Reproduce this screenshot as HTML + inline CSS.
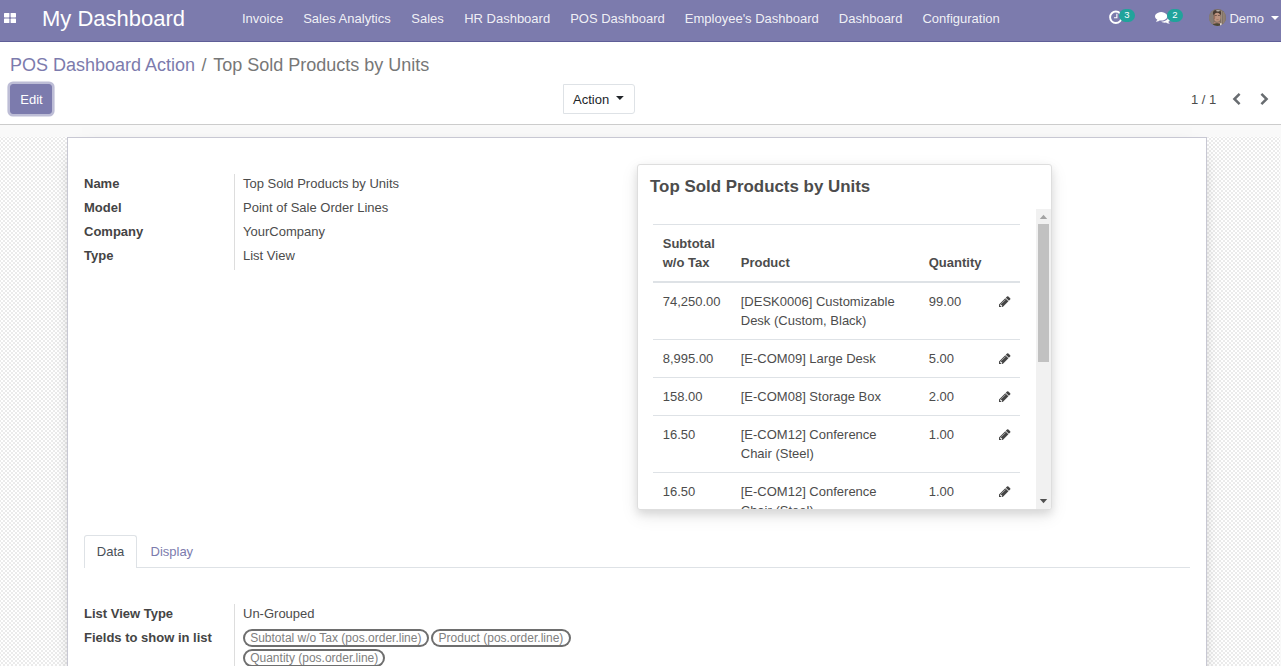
<!DOCTYPE html>
<html lang="en">
<head>
<meta charset="utf-8">
<title>Odoo - Top Sold Products by Units</title>
<style>
*{box-sizing:border-box}
html,body{margin:0;padding:0}
body{width:1281px;height:666px;overflow:hidden;background:#fff;font-family:"Liberation Sans",Arial,sans-serif;font-size:13px;line-height:19.5px;color:#4c4c4c;position:relative}
a{text-decoration:none;color:#7c7bad}
svg{display:block}
/* navbar */
.nav{position:absolute;left:0;top:0;width:1281px;height:42px;background:#7c7bad;border-bottom:1px solid #5f5e97;color:rgba(255,255,255,.9)}
.nav .apps{position:absolute;left:4px;top:13px;width:12px;height:10px}
.nav .brand{position:absolute;left:42px;top:0;height:40px;line-height:37px;font-size:22px;color:#fff;white-space:nowrap}
.nav .menu{position:absolute;left:232px;top:0;height:40px;display:flex;white-space:nowrap}
.nav .menu span{display:block;padding:0 10px;line-height:37px;font-size:13px}
.nav .ico{position:absolute}
.badge{position:absolute;top:9px;height:13px;width:16px;border-radius:6.5px;background:#21a39b;color:#fff;font-size:9.5px;line-height:12px;text-align:center}
.nav .user{position:absolute;left:1229.4px;top:0;line-height:37px;font-size:13px}
.nav .avatar{position:absolute;left:1209px;top:9px;width:17px;height:17px;border-radius:50%;overflow:hidden}
.caret-w{position:absolute;left:1271px;top:16px;width:0;height:0;border-left:4px solid transparent;border-right:4px solid transparent;border-top:4px solid #fff}
/* control panel */
.cp{position:absolute;left:0;top:42px;width:1281px;height:83px;background:#fff;border-bottom:1px solid #ccc}
.bc{position:absolute;left:10px;top:10px;font-size:18px;line-height:27px;white-space:nowrap;color:#777}
.bc a{color:#7c7bad}
.bc .sep{padding:0 6.5px}
.btn-edit{position:absolute;left:10px;top:42px;width:42px;height:30px;border-radius:3px;background:#7c7bad;border:1px solid #7c7bad;color:#fff;font-size:13px;line-height:30px;text-align:center;box-shadow:0 0 0 2.6px rgba(124,123,173,.5);padding-left:1px}
.btn-action{position:absolute;left:563px;top:42px;width:72px;height:30px;border-radius:0 3px 3px 0;background:#fff;border:1px solid #dee2e6;color:#212529;font-size:13px;line-height:30px;padding-left:9px}
.btn-action svg{position:absolute;left:52.2px;top:11px}
.pager{position:absolute;left:1191px;top:43px;height:30px;line-height:30px;font-size:13px;color:#4c4c4c}
.chev{position:absolute;top:50px;width:10px;height:14px}
/* content */
.content{position:absolute;left:0;top:125px;width:1281px;height:541px;background:#f9f9f9;overflow:hidden}
.sheetbg{position:absolute;left:0;top:12px;width:1280px;height:600px;background-color:#fff;
 background-image:conic-gradient(#ebebeb 25%,#fff 0 50%,#ebebeb 0 75%,#fff 0);background-size:4px 4px;background-position:3px 1px}
.sheet{position:absolute;left:67px;top:0;width:1140px;height:600px;background:#fff;border:1px solid #c8c8d3;box-shadow:0 5px 20px -15px #000}
/* everything inside .sheet is positioned relative to page via .abs wrapper */
.abs{position:absolute;left:-68px;top:-138px;width:1281px;height:700px}
.lbl{position:absolute;left:84px;font-weight:bold;color:#444;white-space:nowrap;line-height:19.5px}
.val{position:absolute;left:243px;white-space:nowrap;line-height:19.5px;color:#4c4c4c}
.vsep{position:absolute;left:234px;width:1px;background:#ddd}
/* card */
.card{position:absolute;left:637px;top:164px;width:415px;height:346px;background:#fff;border:1px solid #dedede;border-radius:3px;box-shadow:0 4px 8px 0 rgba(0,0,0,.10),0 6px 18px 0 rgba(0,0,0,.09)}
.card h3{position:absolute;left:12px;top:10px;margin:0;font-size:16.9px;line-height:24px;font-weight:bold;color:#4c4c4c;white-space:nowrap}
.cbody{position:absolute;left:0;top:44px;width:398px;height:300px;overflow:hidden}
.sb{position:absolute;left:398px;top:44px;width:15px;height:300px;background:#f1f1f1;border-radius:0 0 3px 0}
.sb .thumb{position:absolute;left:2px;top:15px;width:11px;height:138px;background:#c1c1c1}
.sb svg{position:absolute;left:0;top:0}

table.t{position:absolute;left:15px;top:15px;width:367px;border-collapse:collapse;table-layout:fixed;font-size:13px;line-height:19px;color:#4c4c4c}
table.t th,table.t td{padding:9px 9.75px;vertical-align:top;text-align:left;border-top:1px solid #dee2e6}
table.t th{vertical-align:bottom;border-bottom:2px solid #dee2e6;font-weight:bold;color:#4c4c4c}
.pen{width:11.6px;height:11.6px;margin-top:3.8px;margin-left:.2px}
/* tabs */
.tabline{position:absolute;left:84px;top:567px;width:1106px;height:1px;background:#dee2e6}
.tab1{position:absolute;left:84px;top:535px;width:53px;height:33px;border:1px solid #dee2e6;border-bottom:0;border-radius:3px 3px 0 0;background:#fff;line-height:31px;text-align:center;color:#495057}
.tab2{position:absolute;left:150.5px;top:536px;line-height:31px;color:#7c7bad}
.tag{position:absolute;height:18px;border-radius:9px;padding:3px 7.2px;font-size:12px;line-height:12px;color:#808080;box-shadow:inset 0 0 0 2px #6e6e6e;white-space:nowrap;background:#fff}
</style>
</head>
<body>
<div class="nav">
  <svg class="apps" viewBox="0 0 12 10"><rect x="0" y="0" width="5.4" height="4.4" rx=".6" fill="#fff"/><rect x="6.6" y="0" width="5.4" height="4.4" rx=".6" fill="#fff"/><rect x="0" y="5.6" width="5.4" height="4.4" rx=".6" fill="#fff"/><rect x="6.6" y="5.6" width="5.4" height="4.4" rx=".6" fill="#fff"/></svg>
  <div class="brand">My Dashboard</div>
  <div class="menu"><span>Invoice</span><span>Sales Analytics</span><span style="margin-left:.7px">Sales</span><span style="margin-left:.3px">HR Dashboard</span><span>POS Dashboard</span><span>Employee's Dashboard</span><span>Dashboard</span><span>Configuration</span></div>
  <svg class="ico" style="left:1108px;top:9px;width:16px;height:17px" viewBox="0 0 16 17"><circle cx="7.850" cy="8.300" r="5.750" fill="none" stroke="#fff" stroke-width="1.900"/><path d="M8.300 4.800h1.150v4.400h-3.450v-.9h2.300z" fill="#fff"/></svg>
  <div class="badge" style="left:1119px">3</div>
  <svg class="ico" style="left:1154.5px;top:10.100px;width:15.7px;height:14.800px" preserveAspectRatio="none" viewBox="0 0 1792 1792"><path fill="#fff" d="M1408 768q0 139-94 257t-256.500 186.500-353.500 68.500q-86 0-176-16-124 88-278 128-36 9-86 16h-3q-11 0-20.500-8t-11.500-21q-1-3-1-6.500t0.500-6.500 2-6l2.500-5t3.500-5.500 4-5 4.500-5 4-4.500q5-6 23-25t26-29.500 22.500-29 25-38.500 20.500-44q-124-72-195-177t-71-224q0-139 94-257t256.500-186.500 353.500-68.500 353.500 68.500 256.500 186.500 94 257zM1792 1024q0 120-71 224.500t-195 176.500q10 24 20.500 44t25 38.500 22.500 29 26 29.500 23 25q1 1 4 4.500t4.500 5 4 5 3.500 5.500l2.500 5t2 6 0.500 6.500-1 6.500q-3 14-13 22t-22 7q-50-7-86-16-154-40-278-128-90 16-176 16-271 0-472-132 58 4 88 4 161 0 309-45t264-129q125-92 192-212t67-254q0-77-23-152 129 71 204 178t75 230z"/></svg>
  <div class="badge" style="left:1167px">2</div>
  <div class="avatar"><svg width="17" height="17" viewBox="0 0 17 17"><defs><filter id="bl" x="-10%" y="-10%" width="120%" height="120%"><feGaussianBlur stdDeviation=".45"/></filter></defs><rect width="17" height="17" fill="#7b6d63"/><g filter="url(#bl)"><rect x="-1" y="-1" width="5.500" height="19" fill="#857c77"/><rect x="11.800" y="-1" width="6.200" height="19" fill="#85776b"/><rect x="12.600" y="2" width="1" height="13" fill="#b9aa9a"/><rect x="14.300" y="3" width=".9" height="12" fill="#a89888"/><rect x="13.500" y="2" width=".7" height="13" fill="#5e5148"/><ellipse cx="8" cy="4" rx="4.100" ry="2.900" fill="#4a3a30"/><ellipse cx="9" cy="1.800" rx="2" ry=".7" fill="#beb6b0"/><ellipse cx="8.200" cy="8.300" rx="3.300" ry="4.500" fill="#bd9380"/><ellipse cx="5.400" cy="8" rx=".8" ry="2.500" fill="#9a6e5c"/><rect x="5.800" y="6.300" width="2" height=".7" fill="#5b4339"/><rect x="8.900" y="6.300" width="2" height=".7" fill="#5b4339"/><rect x="7.400" y="10.500" width="2.200" height=".6" fill="#8d6453"/><path d="M5 12.500c1 1.500 4.500 1.500 6 0l.5 3h-7z" fill="#b08374"/><path d="M2.500 18c.3-3 2.500-3.800 5.800-3.800 2.200 0 4 .6 4.700 3.800z" fill="#4b4736"/><path d="M11 14.200l1.700.3v2.500h-1.500z" fill="#efeae6"/></g></svg></div>
  <div class="user">Demo</div>
  <div class="caret-w"></div>
</div>
<div class="cp">
  <div class="bc"><a>POS Dashboard Action</a><span class="sep">/</span>Top Sold Products by Units</div>
  <div class="btn-edit">Edit</div>
  <div class="btn-action">Action<svg width="8" height="4" viewBox="0 0 8 4"><polygon points="0,0 7.800,0 3.900,4" fill="#212529"/></svg></div>
  <div class="pager">1 / 1</div>
  <svg class="chev" style="left:1231.500px" viewBox="0 0 10 14"><polyline points="7.6,1.800 2.400,7 7.600,12.200" fill="none" stroke="#686c70" stroke-width="2.500"/></svg>
  <svg class="chev" style="left:1259.300px" viewBox="0 0 10 14"><polyline points="2.400,1.800 7.600,7 2.400,12.200" fill="none" stroke="#686c70" stroke-width="2.500"/></svg>
</div>
<div class="content">
  <div class="sheetbg">
    <div class="sheet"><div class="abs">
      <div class="vsep" style="top:174px;height:96px"></div>
      <div class="lbl" style="top:174px">Name</div><div class="val" style="top:174px">Top Sold Products by Units</div>
      <div class="lbl" style="top:198px">Model</div><div class="val" style="top:198px">Point of Sale Order Lines</div>
      <div class="lbl" style="top:222px">Company</div><div class="val" style="top:222px">YourCompany</div>
      <div class="lbl" style="top:246px">Type</div><div class="val" style="top:246px">List View</div>

      <div class="card">
        <h3>Top Sold Products by Units</h3>
        <div class="cbody">
          <table class="t">
            <colgroup><col style="width:78px"><col style="width:188px"><col style="width:70px"><col style="width:31px"></colgroup>
            <thead><tr><th>Subtotal w/o Tax</th><th>Product</th><th>Quantity</th><th></th></tr></thead>
            <tbody>
              <tr><td>74,250.00</td><td>[DESK0006] Customizable Desk (Custom, Black)</td><td>99.00</td><td><svg class="pen" viewBox="0 0 1536 1536"><path fill="#444" transform="translate(0,-128)" d="M363 1536l91-91-235-235-91 91v107h128v128h107zM886 608q0-22-22-22-10 0-17 7l-542 542q-7 7-7 17 0 22 22 22 10 0 17-7l542-542q7-7 7-17zM832 416l416 416-832 832h-416v-416zM1515 512q0 53-37 90l-166 166-416-416 166-165q36-38 90-38 53 0 91 38l235 234q37 39 37 91z"/></svg></td></tr>
              <tr><td>8,995.00</td><td>[E-COM09] Large Desk</td><td>5.00</td><td><svg class="pen" viewBox="0 0 1536 1536"><path fill="#444" transform="translate(0,-128)" d="M363 1536l91-91-235-235-91 91v107h128v128h107zM886 608q0-22-22-22-10 0-17 7l-542 542q-7 7-7 17 0 22 22 22 10 0 17-7l542-542q7-7 7-17zM832 416l416 416-832 832h-416v-416zM1515 512q0 53-37 90l-166 166-416-416 166-165q36-38 90-38 53 0 91 38l235 234q37 39 37 91z"/></svg></td></tr>
              <tr><td>158.00</td><td>[E-COM08] Storage Box</td><td>2.00</td><td><svg class="pen" viewBox="0 0 1536 1536"><path fill="#444" transform="translate(0,-128)" d="M363 1536l91-91-235-235-91 91v107h128v128h107zM886 608q0-22-22-22-10 0-17 7l-542 542q-7 7-7 17 0 22 22 22 10 0 17-7l542-542q7-7 7-17zM832 416l416 416-832 832h-416v-416zM1515 512q0 53-37 90l-166 166-416-416 166-165q36-38 90-38 53 0 91 38l235 234q37 39 37 91z"/></svg></td></tr>
              <tr><td>16.50</td><td>[E-COM12] Conference Chair (Steel)</td><td>1.00</td><td><svg class="pen" viewBox="0 0 1536 1536"><path fill="#444" transform="translate(0,-128)" d="M363 1536l91-91-235-235-91 91v107h128v128h107zM886 608q0-22-22-22-10 0-17 7l-542 542q-7 7-7 17 0 22 22 22 10 0 17-7l542-542q7-7 7-17zM832 416l416 416-832 832h-416v-416zM1515 512q0 53-37 90l-166 166-416-416 166-165q36-38 90-38 53 0 91 38l235 234q37 39 37 91z"/></svg></td></tr>
              <tr><td>16.50</td><td>[E-COM12] Conference Chair (Steel)</td><td>1.00</td><td><svg class="pen" viewBox="0 0 1536 1536"><path fill="#444" transform="translate(0,-128)" d="M363 1536l91-91-235-235-91 91v107h128v128h107zM886 608q0-22-22-22-10 0-17 7l-542 542q-7 7-7 17 0 22 22 22 10 0 17-7l542-542q7-7 7-17zM832 416l416 416-832 832h-416v-416zM1515 512q0 53-37 90l-166 166-416-416 166-165q36-38 90-38 53 0 91 38l235 234q37 39 37 91z"/></svg></td></tr>
            </tbody>
          </table>
        </div>
        <div class="sb"><div class="thumb"></div><svg width="15" height="300" viewBox="0 0 15 300"><polygon points="3.800,10 11.200,10 7.500,5.800" fill="#a3a3a3"/><polygon points="3.800,290 11.200,290 7.500,294.200" fill="#505050"/></svg></div>
      </div>

      <div class="tabline"></div>
      <div class="tab1">Data</div>
      <div class="tab2">Display</div>

      <div class="vsep" style="top:604px;height:80px"></div>
      <div class="lbl" style="top:604px">List View Type</div><div class="val" style="top:604px">Un-Grouped</div>
      <div class="lbl" style="top:628px">Fields to show in list</div>
      <div class="tag" style="left:243px;top:629px">Subtotal w/o Tax (pos.order.line)</div>
      <div class="tag" style="left:431.400px;top:629px">Product (pos.order.line)</div>
      <div class="tag" style="left:243px;top:649.200px">Quantity (pos.order.line)</div>
    </div></div>
  </div>
</div>
</body>
</html>
